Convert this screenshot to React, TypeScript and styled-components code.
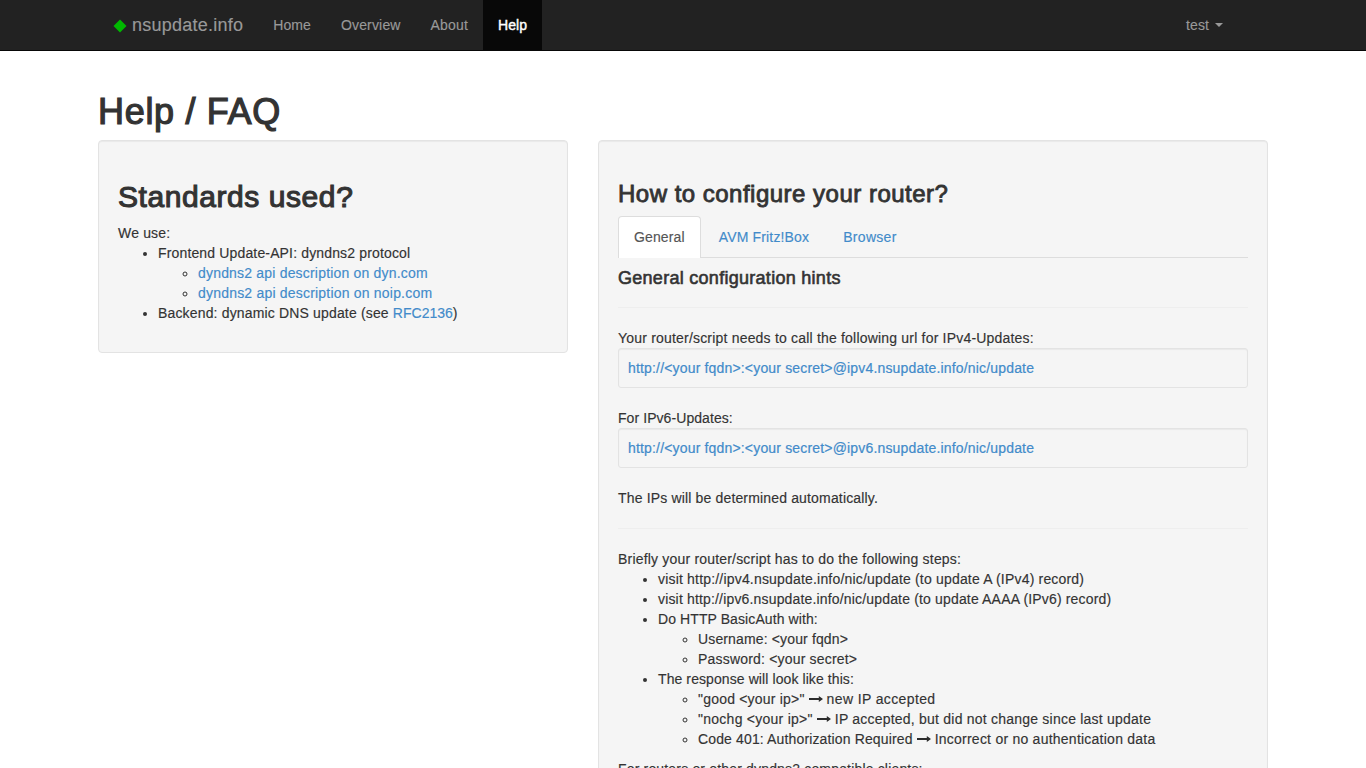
import React from "react";
import styled, { createGlobalStyle } from "styled-components";

const GlobalStyle = createGlobalStyle`
  *, *::before, *::after { box-sizing: border-box; }
  html { height: 100%; overflow: hidden; }
  body {
    margin: 0;
    height: 768px;
    overflow: hidden;
    background: #fff;
    color: #333;
    font-family: "Liberation Sans", Arial, sans-serif;
    font-size: 14px;
    line-height: 20px;
    -webkit-text-stroke: 0.15px;
  }
`;

const Navbar = styled.nav`
  height: 51px;
  background: #222;
  border-bottom: 1px solid #080808;
`;

const NavInner = styled.div`
  display: flex;
  width: 1170px;
  margin: 0 auto;
  padding: 0 30px 0 15px;
`;

const Brand = styled.a`
  display: flex;
  align-items: center;
  height: 50px;
  padding-right: 15px;
  color: #999;
  font-size: 18px;
`;

const Diamond = styled.svg`
  width: 14px;
  height: 14px;
  margin: 2px 5px 0 0;
`;

const NavItem = styled.a<{ $active?: boolean }>`
  height: 50px;
  padding: 15px;
  color: ${(p) => (p.$active ? "#fff" : "#999")};
  background: ${(p) => (p.$active ? "#080808" : "transparent")};
  -webkit-text-stroke: ${(p) => (p.$active ? "0.4px" : "0.15px")};
`;

const UserMenu = styled(NavItem)`
  display: flex;
  align-items: center;
  margin-left: auto;
`;

const Caret = styled.span`
  margin-left: 6px;
  border-top: 4px solid #999;
  border-left: 4px solid transparent;
  border-right: 4px solid transparent;
`;

const Page = styled.main`
  width: 1170px;
  margin: 0 auto;
  padding-top: 39.4px;
`;

const Columns = styled.div`
  display: grid;
  grid-template-columns: 470px 670px;
  gap: 30px;
  align-items: start;
`;

const Text = styled.span<{ $track?: number }>`
  letter-spacing: ${(p) => p.$track ?? 0.17}px;
`;

const H1 = styled.h1`
  height: 39.6px;
  margin: 0 0 10px;
  padding-top: 1.4px;
  font-size: 36px;
  font-weight: 400;
  line-height: 39.6px;
  -webkit-text-stroke: 1.2px #333;
`;

const H2 = styled.h2`
  margin: 20px 0 10px;
  font-size: 30px;
  font-weight: 400;
  line-height: 33px;
  -webkit-text-stroke: 1.1px #333;
`;

const H3 = styled.h3`
  height: 26.4px;
  margin: 20px 0 10px;
  padding-top: 0.8px;
  font-size: 24px;
  font-weight: 400;
  line-height: 26.4px;
  -webkit-text-stroke: 0.85px #333;
`;

const H4 = styled.h4`
  height: 19.8px;
  margin: 10px 0;
  padding-top: 1.4px;
  font-size: 18px;
  font-weight: 400;
  line-height: 19.8px;
  -webkit-text-stroke: 0.6px #333;
`;

const Well = styled.section`
  padding: 19px;
  background: #f5f5f5;
  border: 1px solid #e3e3e3;
  border-radius: 4px;
  box-shadow: inset 0 1px 1px rgba(0, 0, 0, 0.05);
  display: flow-root;
`;

const UrlBox = styled.div`
  margin-bottom: 20px;
  padding: 9px;
  border: 1px solid #e3e3e3;
  border-radius: 3px;
  box-shadow: inset 0 1px 1px rgba(0, 0, 0, 0.05);
`;

const Link = styled.a`
  color: #428bca;
`;

const UrlLink = styled(Link)`
  -webkit-text-stroke: 0.2px;
`;

const Tabs = styled.div`
  display: flex;
  height: 41.2px;
  border-bottom: 1px solid #ddd;
`;

const Tab = styled.a<{ $active?: boolean }>`
  height: 42px;
  margin-right: 2px;
  padding: 10px 15px;
  border: 1px solid ${(p) => (p.$active ? "#ddd" : "transparent")};
  border-bottom: 0;
  border-radius: 4px 4px 0 0;
  color: ${(p) => (p.$active ? "#555" : "#428bca")};
  background: ${(p) => (p.$active ? "#fff" : "transparent")};
`;

const Rule = styled.hr`
  margin: 20px 0;
  border: 0;
  border-top: 1px solid #eee;
`;

const Line = styled.div`
  height: 20px;
  white-space: nowrap;
`;

const List = styled.ul`
  margin: 0 0 10px;
  padding-left: 40px;
  white-space: nowrap;

  & & {
    margin: 0;
  }
`;

const ArrowIcon = styled.svg`
  width: 14px;
  height: 8px;
  margin: 0 4px;
  vertical-align: 1px;
`;

const Arrow = () => (
  <ArrowIcon viewBox="0 0 14 8" role="img" aria-label="→">
    <path d="M0 3.1H9.8V1L14 4 9.8 7V4.9H0Z" fill="#2c2c2c" />
  </ArrowIcon>
);

export default function App() {
  return (
    <>
      <GlobalStyle />
      <Navbar>
        <NavInner>
          <Brand>
            <Diamond viewBox="0 0 14 14">
              <path d="M7 .5 13.5 7 7 13.5 .5 7Z" fill="#00b800" />
            </Diamond>
            <Text $track={0.24}>nsupdate.info</Text>
          </Brand>
          <NavItem><Text $track={0.1}>Home</Text></NavItem>
          <NavItem><Text $track={0.16}>Overview</Text></NavItem>
          <NavItem><Text $track={0.17}>About</Text></NavItem>
          <NavItem $active><Text $track={0.05}>Help</Text></NavItem>
          <UserMenu><Text $track={0.1}>test</Text><Caret /></UserMenu>
        </NavInner>
      </Navbar>
      <Page>
        <H1><Text $track={0.68}>Help / FAQ</Text></H1>
        <Columns>
          <Well>
            <H2><Text $track={0.57}>Standards used?</Text></H2>
            <Line><Text>We use:</Text></Line>
            <List>
              <li>
                <Text $track={0.15}>Frontend Update-API: dyndns2 protocol</Text>
                <List>
                  <li><Link><Text $track={0.19}>dyndns2 api description on dyn.com</Text></Link></li>
                  <li><Link><Text $track={0.2}>dyndns2 api description on noip.com</Text></Link></li>
                </List>
              </li>
              <li>
                <Text $track={0.16}>Backend: dynamic DNS update (see </Text>
                <Text $track={0}><Link>RFC2136</Link>)</Text>
              </li>
            </List>
          </Well>
          <Well>
            <H3><Text $track={0.49}>How to configure your router?</Text></H3>
            <Tabs>
              <Tab $active><Text $track={0.13}>General</Text></Tab>
              <Tab><Text $track={0.16}>AVM Fritz!Box</Text></Tab>
              <Tab><Text $track={0.3}>Browser</Text></Tab>
            </Tabs>
            <H4><Text $track={0.28}>General configuration hints</Text></H4>
            <Rule />
            <Line><Text $track={0.195}>Your router/script needs to call the following url for IPv4-Updates:</Text></Line>
            <UrlBox><UrlLink><Text>{"http://<your fqdn>:<your secret>@ipv4.nsupdate.info/nic/update"}</Text></UrlLink></UrlBox>
            <Line><Text $track={0.07}>For IPv6-Updates:</Text></Line>
            <UrlBox><UrlLink><Text>{"http://<your fqdn>:<your secret>@ipv6.nsupdate.info/nic/update"}</Text></UrlLink></UrlBox>
            <Line><Text $track={0.16}>The IPs will be determined automatically.</Text></Line>
            <Rule />
            <Line><Text $track={0.19}>Briefly your router/script has to do the following steps:</Text></Line>
            <List>
              <li><Text $track={0.185}>visit http://ipv4.nsupdate.info/nic/update (to update A (IPv4) record)</Text></li>
              <li><Text $track={0.165}>visit http://ipv6.nsupdate.info/nic/update (to update AAAA (IPv6) record)</Text></li>
              <li>
                <Text $track={0.09}>Do HTTP BasicAuth with:</Text>
                <List>
                  <li><Text $track={0.14}>{"Username: <your fqdn>"}</Text></li>
                  <li><Text $track={0.19}>{"Password: <your secret>"}</Text></li>
                </List>
              </li>
              <li>
                <Text $track={0.09}>The response will look like this:</Text>
                <List>
                  <li>
                    <Text $track={0.2}>{'"good <your ip>"'}</Text>
                    <Arrow />
                    <Text $track={0.38}>new IP accepted</Text>
                  </li>
                  <li>
                    <Text $track={0.26}>{'"nochg <your ip>"'}</Text>
                    <Arrow />
                    <Text $track={0.22}>IP accepted, but did not change since last update</Text>
                  </li>
                  <li>
                    <Text $track={0.14}>Code 401: Authorization Required</Text>
                    <Arrow />
                    <Text $track={0.24}>Incorrect or no authentication data</Text>
                  </li>
                </List>
              </li>
            </List>
            <Line><Text>For routers or other dyndns2 compatible clients:</Text></Line>
          </Well>
        </Columns>
      </Page>
    </>
  );
}
